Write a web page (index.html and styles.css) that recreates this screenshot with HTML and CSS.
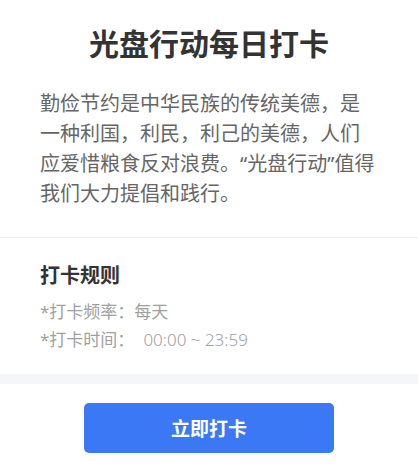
FILE: index.html
```html
<!DOCTYPE html>
<html lang="zh-CN">
<head>
<meta charset="utf-8">
<link rel="stylesheet" href="styles.css">
</head>
<body>
<div class="page">
  <section class="intro">
    <h1 class="title">光盘行动每日打卡</h1>
    <p class="desc">勤俭节约是中华民族的传统美德，是一种利国，利民，利己的美德，人们应爱惜粮食反对浪费。<span class="q">“</span>光盘行动<span class="q">”</span>值得我们大力提倡和践行。</p>
  </section>
  <section class="rules">
    <h2 class="rules-title">打卡规则</h2>
    <p class="rule">*打卡频率：每天</p>
    <p class="rule">*打卡时间：<span class="time">00:00 ~ 23:59</span></p>
  </section>
  <div class="band"></div>
  <div class="actions">
    <button class="btn">立即打卡</button>
  </div>
</div>
</body>
</html>
```
FILE: styles.css
```css
* { box-sizing: border-box; }
html, body { margin: 0; padding: 0; background: #fff; }
body {
  font-family: "Noto Sans", "Noto Sans CJK SC", sans-serif;
  width: 418px;
}
.intro {
  padding: 24px 40px 28px;
  border-bottom: 1px solid #eeeeee;
}
.title {
  margin: 0;
  text-align: center;
  font-size: 30px;
  line-height: 40px;
  font-weight: 700;
  color: #333;
}
.desc {
  margin: 25px 0 0;
  font-size: 20px;
  line-height: 30px;
  color: #666;
}
.q {
  font-family: "Noto Sans", sans-serif;
}
.rules {
  padding: 24px 40px 20px;
}
.rules-title {
  margin: 0 0 8px;
  font-size: 20px;
  line-height: 28px;
  font-weight: 700;
  color: #333;
}
.rule {
  margin: 0;
  font-size: 17px;
  line-height: 28px;
  color: #a0a0a0;
}
.time {
  padding-left: 9px;
  font-weight: 300;
}
.band {
  height: 10px;
  background: #f5f6fa;
}
.actions {
  display: flex;
  justify-content: center;
  padding-top: 19px;
}
.btn {
  width: 250px;
  height: 50px;
  border: none;
  border-radius: 5px;
  background: #3b78f6;
  color: #fff;
  font-family: inherit;
  font-size: 19px;
  font-weight: 700;
}
```
